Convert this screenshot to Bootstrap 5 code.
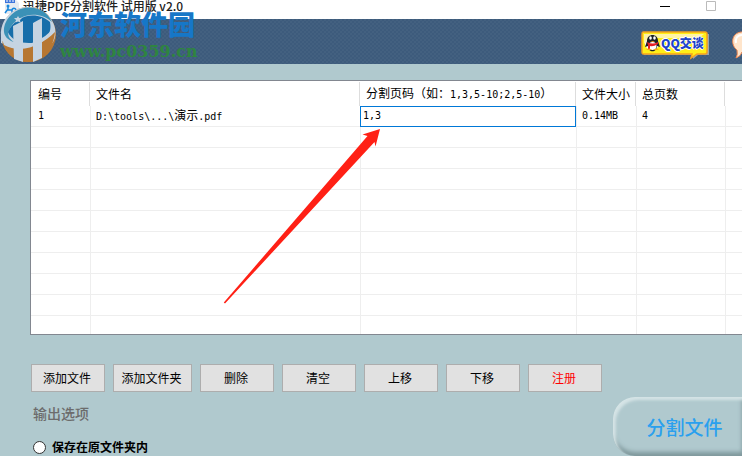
<!DOCTYPE html>
<html lang="zh-CN">
<head>
<meta charset="utf-8">
<meta name="viewport" content="width=device-width, initial-scale=1">
<title>迅捷PDF分割软件</title>
<link href="https://cdn.jsdelivr.net/npm/bootstrap@5.3.0/dist/css/bootstrap.min.css" rel="stylesheet">
<style>
body{background:#b0c9ce;color:#000;font:12px/18px "Noto Sans CJK SC",sans-serif;min-height:100vh}
.titlebar{height:19px;padding-left:4px}
.titlebar h1{font-size:12px;line-height:12px;margin:0 0 0 3px;color:#222}
.win-btn{border:0;background:none;padding:0;width:46px;height:12px;line-height:0}
.banner{height:45px;background:#3d5b7c repeating-conic-gradient(#34527200 0 25%,#4b688766 0 50%) 0 0/4px 4px;padding-left:calc(100% - 101px)}
.watermark{left:0;top:6px;pointer-events:none}
.wm-name{font-size:27px;line-height:28px;font-weight:900;color:#1677c8}
.wm-site{font:bold 16px/20px "DejaVu Serif",serif;color:#2e8540}
.qq{width:68px;height:29px;margin-top:12px;color:#1d43c8}
.qq-label{left:20px;top:3px;font-size:12px;font-weight:900;line-height:18px;text-shadow:1px 0 #fff,-1px 0 #fff,0 1px #fff,0 -1px #fff}
.grid-box{margin:16px 0 0 30px;background:#fff;border:1px solid #828790;border-right:0;overflow:hidden}
.files{table-layout:fixed;width:100%;border-collapse:separate;border-spacing:0}
.files th{height:25px;padding:1px 0 0 5px;font-weight:400;white-space:nowrap;background:linear-gradient(#ddd,#ddd) right 1px top 1px/1px 100% no-repeat}
.files th:first-child,.files td:first-child{padding-left:7px}
.files th:last-child{background:none}
.files td{height:21px;padding:0 0 0 5px;line-height:18px;border:solid #eee;border-width:0 1px 1px 0;white-space:nowrap}
.files td:last-child{border-right:0}
.files tr:last-child td{height:18px;border-bottom:0}
.files td.edit{padding:0}
.files .mono{font-family:"DejaVu Sans Mono",monospace;font-size:10px}
.c1,.c4{width:60px}.c2{width:270px}.c3{width:216px}.c5{width:89px}
.pages{display:block;position:relative;width:calc(100% + 1px);height:21px;margin:0 0 -1px -1px;padding:0 2px 2px;border:1px solid #0078d7;outline:0;font:10px/16px "DejaVu Sans Mono",monospace;color:#000}
.arrow{left:192px;top:46px;pointer-events:none}
.actions{padding:29px 0 0 31px}
.tool{width:74px;height:28px;padding:0 2px 0 0;border:1px solid #adadad;background:#e1e1e1;color:#000;line-height:26px;white-space:nowrap}
.tool-wide{width:79px}
.tool-alert{color:#f00}
.options{padding:11px 0 0 33px}
.options legend{font-size:14px;line-height:20px;font-weight:500;color:#6c6c6c;margin:0 0 15px}
.options input{width:13px;height:13px;margin:0 6px 0 0;border:1px solid #333;border-radius:50%;background:#fff;appearance:none}
.options input:checked{background:radial-gradient(#222 0 3px,#fff 4px)}
.options label{font-weight:700}
.split{width:129px;height:59px;margin-top:5px;padding:0 0 0 14px;border:0;border-radius:22px 0 0 22px;background:#b0c9ce;color:#2aa0ee;font-size:19px;font-weight:500;line-height:59px;box-shadow:inset 3px 3px 3px #d5e4e6,inset 0 -4px 4px #7f989c}
</style>
<script src="https://cdn.jsdelivr.net/npm/bootstrap@5.3.0/dist/js/bootstrap.bundle.min.js"></script>
</head>
<body class="overflow-hidden">
<header class="position-relative">
  <div class="titlebar bg-white d-flex align-items-start">
    <svg width="16" height="14" viewBox="0 0 16 14" aria-hidden="true"><path d="M1 0h11l3 3v11H1z" fill="#e5eaf1"/><path d="M1 0h10v3H1z" fill="#3e75dc"/><path d="M2 1h2M5 1h2M8 1h2" stroke="#fff"/><circle cx="4" cy="6" r="1.5" fill="#1686dc"/><path d="M4 7v3h4v3M4 9l-3 4M11 12a2 2 0 1 0-3-2" fill="none" stroke="#1686dc" stroke-width="1.5"/></svg>
    <h1>迅捷PDF分割软件 试用版 v2.0</h1>
    <div class="d-flex ms-auto pe-2">
      <button class="win-btn" type="button" aria-label="最小化"><svg width="10" height="12"><path d="M0 6.5h10" stroke="#000"/></svg></button>
      <button class="win-btn" type="button" aria-label="最大化"><svg width="10" height="12"><path d="M.5 1.500h9v9h-9z" fill="none" stroke="#bbb"/></svg></button>
    </div>
  </div>
  <div class="banner d-flex justify-content-between overflow-hidden">
    <a class="qq position-relative flex-shrink-0" href="#">
      <svg class="d-block" width="68" height="29" viewBox="0 0 68 29" aria-hidden="true">
        <path d="M3 3h65v21H57l-5 4v-4H3z" fill="#9aa5ad"/>
        <path d="M2 1h62q2 0 2 2v18q0 2-2 2h-8l-6 4 1-4H2q-1 0-1-2V3q0-2 1-2z" fill="#ffef17" stroke="#f6a11d" stroke-width="1.500"/>
        <path d="M3 3h60l-5 4H8L3 13z" fill="#fff4a5"/>
        <ellipse cx="11" cy="13" rx="7" ry="6" fill="#fff"/><path d="M6 10c0-8 11-8 11 0l2 6-3-1c0 7-9 7-9 0l-3 1z" fill="#1b2026"/>
        <ellipse cx="11.500" cy="15" rx="4" ry="4" fill="#fff"/><path d="M6 11q6 3 11 0v2q-5 3-8 2v3H7v-4z" fill="#e51e25"/><ellipse cx="9.500" cy="7" rx="1.300" ry="1.700" fill="#fff"/><ellipse cx="13.500" cy="7" rx="1.300" ry="1.700" fill="#fff"/><path d="M9 10h5l-2 1zM5 19q3-3 6 0zM12 19q3-3 6 0z" fill="#f7a51e"/>
      </svg>
      <span class="qq-label position-absolute text-nowrap">QQ交谈</span>
    </a>
    <svg class="flex-shrink-0 mt-2" width="10" height="35" viewBox="0 0 10 35" aria-hidden="true"><path d="M12 5C-1 4-2 18 5 23q1 5-1 8 5-2 6-6h2z" fill="#ffe5cb" stroke="#f28a52"/><path d="M10 8C5 8 3 12 4 16" fill="none" stroke="#fff" stroke-width="2"/></svg>
  </div>
  <div class="watermark position-absolute d-flex">
    <svg width="60" height="58" viewBox="0 0 60 58" aria-hidden="true">
      <circle cx="28.500" cy="28.500" r="27.500" fill="#b77732"/>
      <path d="M1 30C0 13 13 1 28 1c12 0 24 8 27 21 2 12-3 17-10 21l-12 2-32-8z" fill="#c5d4e2"/>
      <path d="M5 18C14-3 43-4 52 16 39 4 17 7 9 24c-2 5 0 9 5 12-9-3-12-9-9-18z" fill="#3b91b7"/>
      <path d="M8 26C15 9 37 4 50 16c3 15-9 21-21 21-9 0-18-3-21-11z" fill="#176eaa"/>
      <path d="M2 35c11 10 35 10 53-9-1 15-12 29-26 30C15 56 6 49 2 35z" fill="#b77732"/>
      <path d="M13 20l10-5v41l-9-3zM33 17l9-5v40l-9 4z" fill="#c5d4e2"/>
      <path d="M1 30c8 12 31 15 53-8-10 19-33 26-50 17z" fill="#c5d4e2"/>
      <path d="M18 10l1.200 2H22l-2 2 .5 2.500-2.500-1-2.500 1 .5-2.500-2-2h2.800z" fill="#c5d4e2"/>
    </svg>
    <div class="d-flex flex-column">
      <span class="wm-name mt-1">河东软件园</span>
      <span class="wm-site mt-1">www.pc0359.cn</span>
    </div>
  </div>
</header>
<main>
  <div class="grid-box position-relative">
    <table class="files">
      <colgroup><col class="c1"><col class="c2"><col class="c3"><col class="c4"><col class="c5"><col></colgroup>
      <thead><tr><th>编号</th><th>文件名</th><th>分割页码（如：<span class="mono">1,3,5-10;2,5-10</span>）</th><th>文件大小</th><th>总页数</th><th></th></tr></thead>
      <tbody>
        <tr><td class="mono">1</td><td><span class="mono">D:\tools\...\</span>演示<span class="mono">.pdf</span></td><td class="edit"><input class="pages" type="text" value="1,3" aria-label="分割页码"></td><td class="mono">0.14MB</td><td class="mono">4</td><td></td></tr>
        <tr><td></td><td></td><td></td><td></td><td></td><td></td></tr>
        <tr><td></td><td></td><td></td><td></td><td></td><td></td></tr>
        <tr><td></td><td></td><td></td><td></td><td></td><td></td></tr>
        <tr><td></td><td></td><td></td><td></td><td></td><td></td></tr>
        <tr><td></td><td></td><td></td><td></td><td></td><td></td></tr>
        <tr><td></td><td></td><td></td><td></td><td></td><td></td></tr>
        <tr><td></td><td></td><td></td><td></td><td></td><td></td></tr>
        <tr><td></td><td></td><td></td><td></td><td></td><td></td></tr>
        <tr><td></td><td></td><td></td><td></td><td></td><td></td></tr>
        <tr><td></td><td></td><td></td><td></td><td></td><td></td></tr>
      </tbody>
    </table>
    <svg class="arrow position-absolute" width="160" height="180" viewBox="0 0 160 180" aria-hidden="true"><path d="M157 2L139.500 7.500 144.500 9 .8 175.500 2 176.500 151.500 15 152.500 19.500z" fill="#ff2015"/></svg>
  </div>
  <div class="actions d-flex gap-2">
    <button class="tool" type="button">添加文件</button>
    <button class="tool tool-wide" type="button">添加文件夹</button>
    <button class="tool" type="button">删除</button>
    <button class="tool" type="button">清空</button>
    <button class="tool" type="button">上移</button>
    <button class="tool" type="button">下移</button>
    <button class="tool tool-alert" type="button">注册</button>
  </div>
  <div class="d-flex justify-content-between align-items-start">
    <fieldset class="options">
      <legend>输出选项</legend>
      <div class="d-flex align-items-center"><input type="radio" name="output" id="same-folder"><label for="same-folder">保存在原文件夹内</label></div>
    </fieldset>
    <button class="split" type="button">分割文件</button>
  </div>
</main>
</body>
</html>
